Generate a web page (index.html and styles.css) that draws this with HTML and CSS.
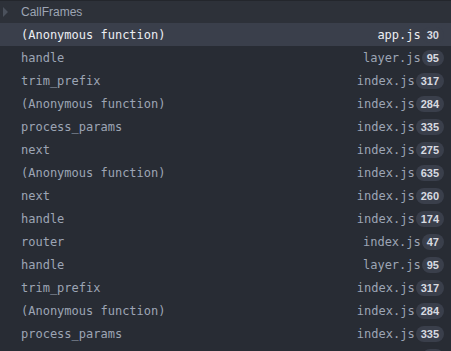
FILE: index.html
```html
<!DOCTYPE html>
<html>
  <head>
    <title>Call frames</title>
    <meta http-equiv="Content-Type" content="text/html; charset=UTF-8">
    <link rel="stylesheet" href="styles.css">
  </head>
  <body>
    <div class="panel">
      <div class="header">
        <span class="arrow"></span>
        <span class="title">CallFrames</span>
      </div>
      <ul class="frames">
        <li class="frame selected"><span class="name">(Anonymous function)</span><span class="file">app.js</span><span class="line">30</span></li>
        <li class="frame"><span class="name">handle</span><span class="file">layer.js</span><span class="line">95</span></li>
        <li class="frame"><span class="name">trim_prefix</span><span class="file">index.js</span><span class="line">317</span></li>
        <li class="frame"><span class="name">(Anonymous function)</span><span class="file">index.js</span><span class="line">284</span></li>
        <li class="frame"><span class="name">process_params</span><span class="file">index.js</span><span class="line">335</span></li>
        <li class="frame"><span class="name">next</span><span class="file">index.js</span><span class="line">275</span></li>
        <li class="frame"><span class="name">(Anonymous function)</span><span class="file">index.js</span><span class="line">635</span></li>
        <li class="frame"><span class="name">next</span><span class="file">index.js</span><span class="line">260</span></li>
        <li class="frame"><span class="name">handle</span><span class="file">index.js</span><span class="line">174</span></li>
        <li class="frame"><span class="name">router</span><span class="file">index.js</span><span class="line">47</span></li>
        <li class="frame"><span class="name">handle</span><span class="file">layer.js</span><span class="line">95</span></li>
        <li class="frame"><span class="name">trim_prefix</span><span class="file">index.js</span><span class="line">317</span></li>
        <li class="frame"><span class="name">(Anonymous function)</span><span class="file">index.js</span><span class="line">284</span></li>
        <li class="frame"><span class="name">process_params</span><span class="file">index.js</span><span class="line">335</span></li>
        <li class="frame"><span class="name"></span><span class="line">&nbsp;</span></li>
      </ul>
    </div>
  </body>
</html>
```

FILE: styles.css
```css
body {
  margin: 0;
  background-color: #282c34;
  overflow: hidden;
}
.panel {
  height: 351px;
  overflow: hidden;
}
.header {
  height: 23px;
  display: flex;
  align-items: center;
  padding-left: 3px;
  background-color: #2d3139;
  border-top: 1px solid #23262c;
  box-sizing: border-box;
}
.arrow {
  width: 0;
  height: 0;
  border-top: 5px solid transparent;
  border-bottom: 5px solid transparent;
  border-left: 5px solid #4b515c;
  margin-right: 13px;
}
.title {
  font-family: "Liberation Sans", Arial, sans-serif;
  font-size: 12px;
  color: #9da5b4;
}
.frames {
  list-style: none;
  margin: 0;
  padding: 0;
}
.frame {
  height: 23px;
  box-sizing: border-box;
  display: flex;
  align-items: center;
  padding: 1px 7px 0 21px;
  font-family: "DejaVu Sans Mono", monospace;
  font-size: 12px;
  color: #9da5b4;
}
.frame.selected {
  background-color: #3a3f4b;
  color: #eceef2;
}
.name {
  flex: 1;
}
.file {
  margin-right: 1px;
}
.line {
  min-width: 12px;
  height: 16px;
  line-height: 16px;
  padding: 0 5px;
  border-radius: 8px;
  background-color: #3a3f4b;
  color: #d7dae0;
  font-family: "Liberation Sans", Arial, sans-serif;
  font-size: 11px;
  font-weight: bold;
  text-align: center;
}
```
